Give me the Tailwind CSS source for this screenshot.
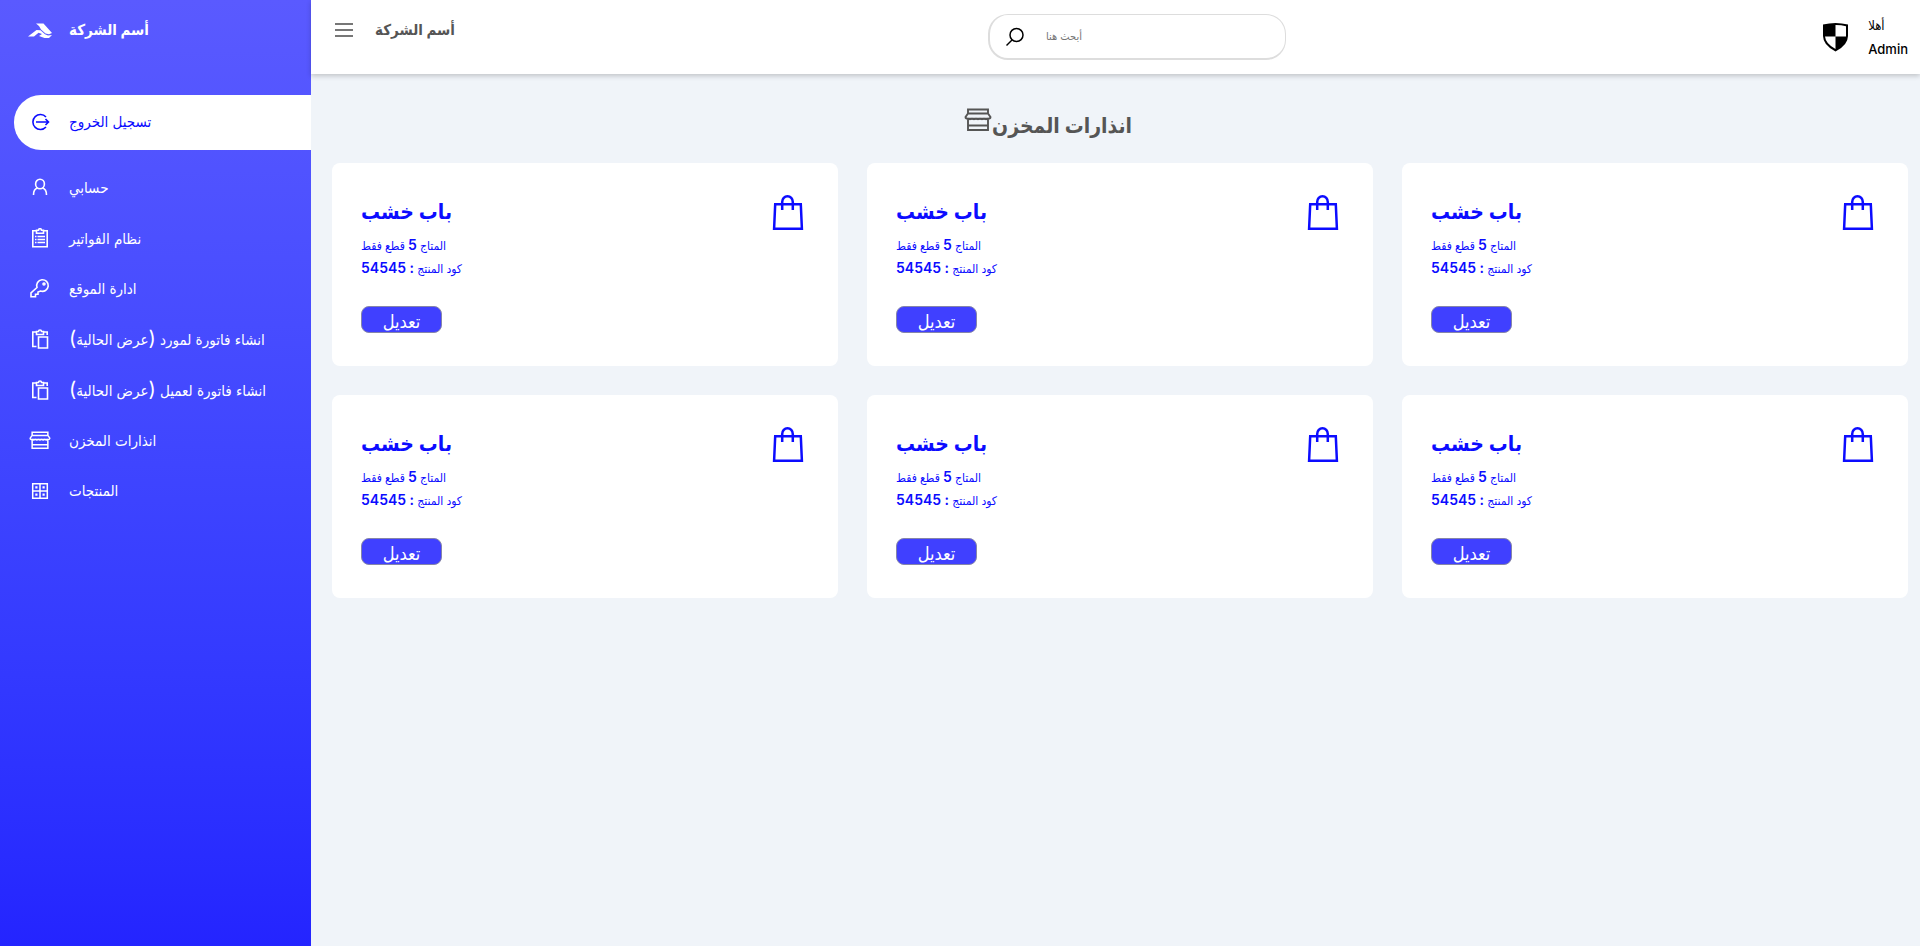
<!DOCTYPE html>
<html lang="ar">
<head>
<meta charset="utf-8">
<title>انذارات المخزن</title>
<script src="https://cdn.jsdelivr.net/npm/@tailwindcss/browser@4"></script>
</head>
<body class="flex min-h-screen bg-[#f0f4f9] font-['Inter','DejaVu_Sans_Condensed','DejaVu_Sans',sans-serif] text-[#555]">
<svg class="hidden">
  <symbol id="bag" viewBox="0 0 32 38"><path d="M3.200 10.200h25.600l1.100 24.600H2.100zM10.200 16V8a5.300 5.800 0 0 1 10.600 0v8" fill="none" stroke="currentColor" stroke-width="2.500"/></symbol>
  <symbol id="store" viewBox="0 0 28 24"><path d="M4 5.500v-4h20v4H4L1.500 9c0 1.300.8 1.700 2.500 1.700h20c1.700 0 2.500-.4 2.500-1.700L24 5.500M4 11v11h20V11M4 17.500h20" fill="none" stroke="currentColor" stroke-width="1.900"/><path d="M4 10.500l2 1 2-1 2 1 2-1 2 1 2-1 2 1 2-1 2 1 2-1" fill="none" stroke="currentColor" stroke-width="1.500"/></symbol>
  <symbol id="copy" viewBox="0 0 20 22"><path d="M6.500 18.500H2.800V4h3.700M13.500 4h3.700v3M6.500 3.500h2a1.500 1.500 0 0 1 3 0h2v3h-7zM8.500 9h9v11h-9z" fill="none" stroke="currentColor" stroke-width="1.600"/></symbol>
</svg>

<aside class="w-[311px] shrink-0 bg-linear-to-b from-[#5a5aff] to-[#2424ff] text-white">
  <div class="flex h-[60px] items-center">
    <svg class="ml-7 h-6 w-6 shrink-0" viewBox="0 0 24 24" fill="currentColor"><path d="M8 5.500h7.500L24 15l-3 1.200-3.500-.7-4.500-4L11 8z"/><path d="M0 18.500l8.500-6.500 4 .3 4.500 4 3 1.200 4-.5-3 3h-4.500L11 18l3-2-3.500-1.200L6 18.500z"/></svg>
    <span class="ml-[17px] text-[15px] font-bold">أسم الشركة</span>
  </div>
  <nav class="pt-[35px]">
    <a href="#" class="ml-[14px] flex h-[55px] items-center rounded-l-[27px] bg-white text-[#0c0cff]">
      <svg class="mb-[2px] ml-4 h-5 w-5 shrink-0" viewBox="0 0 20 20" fill="none" stroke="currentColor" stroke-width="1.600"><path d="M16 5a7.500 7.500 0 1 0 0 10M6 10h12.500M15.500 7l3 3-3 3"/></svg>
      <span class="ml-[19px] text-[15px]">تسجيل الخروج</span>
    </a>
    <ul class="mt-[13px] grid h-[354px] auto-rows-fr text-[15px]">
      <li><a href="#" class="flex h-full items-center"><svg class="mb-[2px] ml-[30px] h-5 w-5 shrink-0" viewBox="0 0 20 20" fill="none" stroke="currentColor" stroke-width="1.600"><ellipse cx="10" cy="7" rx="4.400" ry="4.800"/><path d="M3.500 18c0-4 2-6.500 4-7M16.500 18c0-4-2-6.500-4-7"/></svg><span class="ml-[19px]">حسابي</span></a></li>
      <li><a href="#" class="flex h-full items-center"><svg class="mb-[2px] ml-[30px] h-5 w-5 shrink-0" viewBox="0 0 20 20" fill="none" stroke="currentColor" stroke-width="1.600"><path d="M6.500 2.700H2.800v16h14.400v-16h-3.700M6.500 2.200h2a1.500 1.500 0 0 1 3 0h2v3h-7zM5 8.500h1.500M7.500 8.500H15M5 11.500h1.500M7.500 11.500H15M5 14.500h1.500M7.500 14.500H15"/></svg><span class="ml-[19px]">نظام الفواتير</span></a></li>
      <li><a href="#" class="flex h-full items-center"><svg class="mb-[2px] ml-[30px] h-5 w-5 shrink-0" viewBox="0 0 20 20" fill="none" stroke="currentColor" stroke-width="1.600"><path d="M7 9.500l-6 5.300v4h4.500v-2.500H8V14l2.500-1A5.800 5.800 0 1 0 7 9.500z"/><circle cx="14" cy="6" r="1"/></svg><span class="ml-[19px]">ادارة الموقع</span></a></li>
      <li><a href="#" class="flex h-full items-center"><svg class="mb-[2px] ml-[30px] h-[22px] w-5 shrink-0"><use href="#copy"/></svg><span class="mb-[2px] ml-[19px] leading-6">انشاء فاتورة لمورد <span class="text-xl leading-6">(</span>عرض الحالية<span class="text-xl leading-6">)</span></span></a></li>
      <li><a href="#" class="flex h-full items-center"><svg class="mb-[2px] ml-[30px] h-[22px] w-5 shrink-0"><use href="#copy"/></svg><span class="mb-[2px] ml-[19px] leading-6">انشاء فاتورة لعميل <span class="text-xl leading-6">(</span>عرض الحالية<span class="text-xl leading-6">)</span></span></a></li>
      <li><a href="#" class="flex h-full items-center"><svg class="mb-[2px] ml-[29px] h-[19px] w-[22px] shrink-0"><use href="#store"/></svg><span class="ml-[18px]">انذارات المخزن</span></a></li>
      <li><a href="#" class="flex h-full items-center"><svg class="mb-[2px] ml-[30px] h-5 w-5 shrink-0" viewBox="0 0 20 20" fill="none" stroke="currentColor" stroke-width="1.500"><path d="M2.700 2.700h14.600v14.600H2.700zM10 2.700v14.600M2.700 10h14.600"/><path d="M5.300 6.400h2.200M12.500 6.400h2.200M5.300 13.600h2.200M12.500 13.600h2.200" stroke-width="2.200"/></svg><span class="ml-[19px]">المنتجات</span></a></li>
    </ul>
  </nav>
</aside>

<div class="min-w-0 flex-1">
  <header class="flex h-[74px] justify-between bg-white shadow-[0_2px_5px_rgba(0,0,0,0.2)]">
    <div class="flex h-[60px] w-[677px] min-w-0 items-center">
      <button type="button" aria-label="القائمة" class="ml-6 flex w-[18px] flex-col gap-1"><span class="h-[2px] w-full bg-[#777]"></span><span class="h-[2px] w-full bg-[#777]"></span><span class="h-[2px] w-full bg-[#777]"></span></button>
      <span class="ml-[22px] text-[15px] font-bold">أسم الشركة</span>
    </div>
    <label class="mt-[14px] flex h-[46px] w-[298px] items-center rounded-[20px] border border-b-2 border-l-2 border-[#ddd]">
      <svg class="ml-4 h-5 w-[18px] shrink-0" viewBox="0 0 18 20" fill="none" stroke="#000" stroke-width="1.500"><circle cx="10.500" cy="8" r="6.500"/><path d="M6 13l-5.500 5.500"/></svg>
      <input type="text" placeholder="أبحث هنا" aria-label="أبحث هنا" class="ml-[22px] w-48 text-[11px] placeholder-[#757575] outline-none">
    </label>
    <div class="flex flex-1 justify-end text-[13px] font-medium text-black">
      <svg class="mt-[22px] h-[30px] w-[27px]" viewBox="0 0 27 30"><path d="M1 2.500Q13.500-.5 26 2.500V14q0 9-12.500 15.500Q1 23 1 14z"/><path d="M13.500 3q6 0 10.500 1.300V14.500H13.500zM13.500 14.500V27Q3.500 21.500 3 14.500z" fill="#fff"/></svg>
      <div class="mt-[13px] mr-3 ml-[19px] leading-6"><div>أهلا</div><div>Admin</div></div>
    </div>
  </header>

  <main class="pr-3 pl-[21px]">
    <h1 class="flex h-[89px] items-center justify-center pt-[14px] pr-36 text-[21px] font-bold"><svg class="mb-3 h-6 w-7 shrink-0"><use href="#store"/></svg>انذارات المخزن</h1>
    <div id="cards" class="grid grid-cols-3 gap-[29px] text-[#0c0cff]">
      <article class="flex h-[203px] justify-between rounded-lg bg-white px-[29px] pt-[29px]">
        <div>
          <h2 class="text-[21px] leading-10 font-bold">باب خشب</h2>
          <p class="mt-[2px] text-xs leading-[22px] font-medium">المتاج <span class="text-sm leading-[22px] font-semibold">5</span> قطع فقط</p>
          <p class="text-xs leading-[22px] font-medium">كود المنتج <span class="text-sm leading-[22px] font-semibold">: 54545</span></p>
          <button type="button" class="mt-[26px] h-[27px] w-[81px] rounded-lg border border-[#8585aa] bg-[#4040ff] pt-1 text-lg leading-5 text-white">تعديل</button>
        </div>
        <svg class="mt-[2px] mr-[5px] h-[38px] w-8"><use href="#bag"/></svg>
      </article>
    </div>
  </main>
</div>
<script>
  // All six alerts share one card layout.
  const cards = document.getElementById('cards');
  const first = cards.firstElementChild;
  for (let i = 1; i < 6; i++) cards.append(first.cloneNode(true));
</script>
</body>
</html>
